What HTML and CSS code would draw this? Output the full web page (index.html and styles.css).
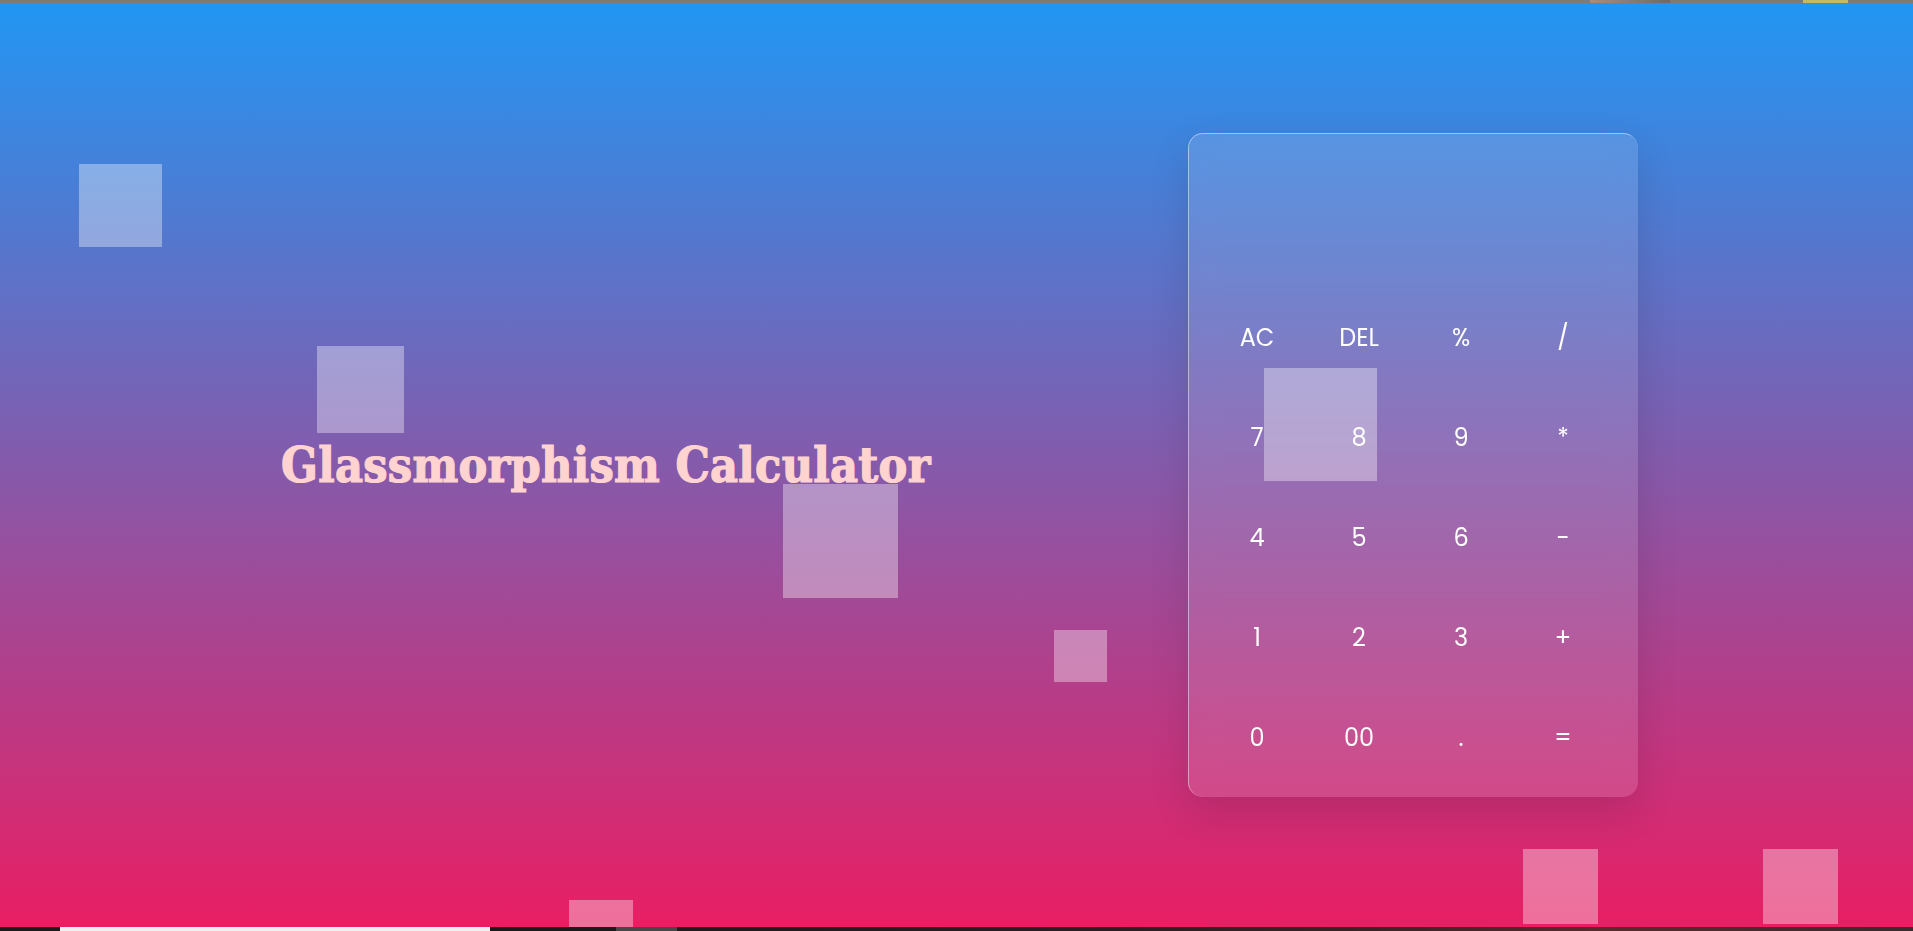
FILE: index.html
```html
<!DOCTYPE html>
<html lang="en">
<head>
<meta charset="utf-8">
<title>Glassmorphism Calculator</title>
<link rel="stylesheet" href="styles.css">
</head>
<body>
  <div class="topbar"><span class="tb-bit tb-a"></span><span class="tb-bit tb-b"></span></div>
  <main class="stage">
    <span class="sq sq1"></span>
    <span class="sq sq2"></span>
    <span class="sq sq3"></span>
    <span class="sq sq4"></span>
    <span class="sq sq6"></span>
    <span class="sq sq7"></span>
    <span class="sq sq8"></span>
    <h2 class="title">Glassmorphism Calculator</h2>
    <div class="calc">
      <div class="display"></div>
      <div class="keys">
        <span class="key">AC</span>
        <span class="key">DEL</span>
        <span class="key">%</span>
        <span class="key">/</span>
        <span class="key">7</span>
        <span class="key">8</span>
        <span class="key">9</span>
        <span class="key">*</span>
        <span class="key">4</span>
        <span class="key">5</span>
        <span class="key">6</span>
        <span class="key">-</span>
        <span class="key">1</span>
        <span class="key">2</span>
        <span class="key">3</span>
        <span class="key">+</span>
        <span class="key">0</span>
        <span class="key">00</span>
        <span class="key">.</span>
        <span class="key">=</span>
      </div>
    </div>
    <span class="sq sq5"></span>
  </main>
  <div class="bottombar">
    <span class="bb-seg bb-dark1"></span>
    <span class="bb-seg bb-white"></span>
    <span class="bb-seg bb-dark2"></span>
    <span class="bb-seg bb-gray"></span>
    <span class="bb-seg bb-rest"></span>
  </div>
</body>
</html>
```

FILE: styles.css
```css
* {
  box-sizing: border-box;
}

html, body {
  margin: 0;
  padding: 0;
  height: 100%;
}

body {
  display: flex;
  flex-direction: column;
  height: 931px;
  overflow: hidden;
  font-family: "Poppins", "Inter", "Noto Sans", sans-serif;
  background: #1e1a1c;
}

.topbar {
  height: 3px;
  flex: none;
  background: #7b7b7b;
  position: relative;
}

.tb-bit {
  position: absolute;
  top: 0;
  height: 3px;
}

.tb-a {
  left: 1590px;
  width: 80px;
  background: linear-gradient(90deg, #b08a70, #8a7a78, #6a6a70);
}

.tb-b {
  left: 1803px;
  width: 45px;
  background: #c8b860;
}

.stage {
  position: relative;
  flex: 1;
  display: flex;
  align-items: center;
  justify-content: space-between;
  padding: 0 275px 0 281px;
  overflow: hidden;
  background: linear-gradient(180deg, #2196f3 0%, #e91e63 100%);
}

.title {
  margin: 0;
  font-family: "DejaVu Serif", serif;
  font-stretch: condensed;
  font-weight: 700;
  font-size: 48px;
  color: #ffd3cf;
  letter-spacing: 0.3px;
  -webkit-text-stroke: 1.2px #ffd3cf;
  position: relative;
  z-index: 2;
}

.sq {
  position: absolute;
  background: rgba(255, 255, 255, 0.36);
  z-index: 1;
}

.sq1 { left: 79px;  top: 161px; width: 83px;  height: 83px; }
.sq2 { left: 317px; top: 343px; width: 87px;  height: 87px; }
.sq3 { left: 783px; top: 481px; width: 115px; height: 114px; }
.sq4 { left: 1054px; top: 627px; width: 53px; height: 52px; }
.sq5 { left: 1264px; top: 365px; width: 113px; height: 113px; z-index: 20; }
.sq6 { left: 569px; top: 897px; width: 64px;  height: 64px; }
.sq7 { left: 1523px; top: 846px; width: 75px; height: 75px; }
.sq8 { left: 1763px; top: 846px; width: 75px; height: 75px; }

.calc {
  position: relative;
  z-index: 10;
  flex: none;
  width: 450px;
  height: 664px;
  padding: 20px 25px 8px 17px;
  border-radius: 15px;
  background: rgba(255, 255, 255, 0.13);
  border-top: 1px solid rgba(255, 255, 255, 0.45);
  border-left: 1px solid rgba(255, 255, 255, 0.45);
  box-shadow: 0 15px 40px rgba(0, 0, 0, 0.12);
  backdrop-filter: blur(15px);
}

.display {
  height: 133px;
}

.keys {
  display: grid;
  grid-template-columns: repeat(4, 102px);
  grid-auto-rows: 100px;
}

.key {
  display: flex;
  align-items: center;
  justify-content: center;
  color: #ffffff;
  font-size: 24px;
  font-weight: 400;
}

.bottombar {
  flex: none;
  height: 4px;
  display: flex;
}

.bb-seg {
  display: block;
  height: 4px;
}

.bb-dark1 { width: 60px; background: #1e1a1c; }
.bb-white { width: 430px; background: #f2eff0; }
.bb-dark2 { width: 126px; background: #1c1a1b; }
.bb-gray  { width: 61px; background: #4a4748; }
.bb-rest  {
  flex: 1;
  background: linear-gradient(90deg, #221a1d 0%, #2a1c22 30%, #3a2226 55%, #5a2a2e 75%, #3a2a2e 100%);
}
```
